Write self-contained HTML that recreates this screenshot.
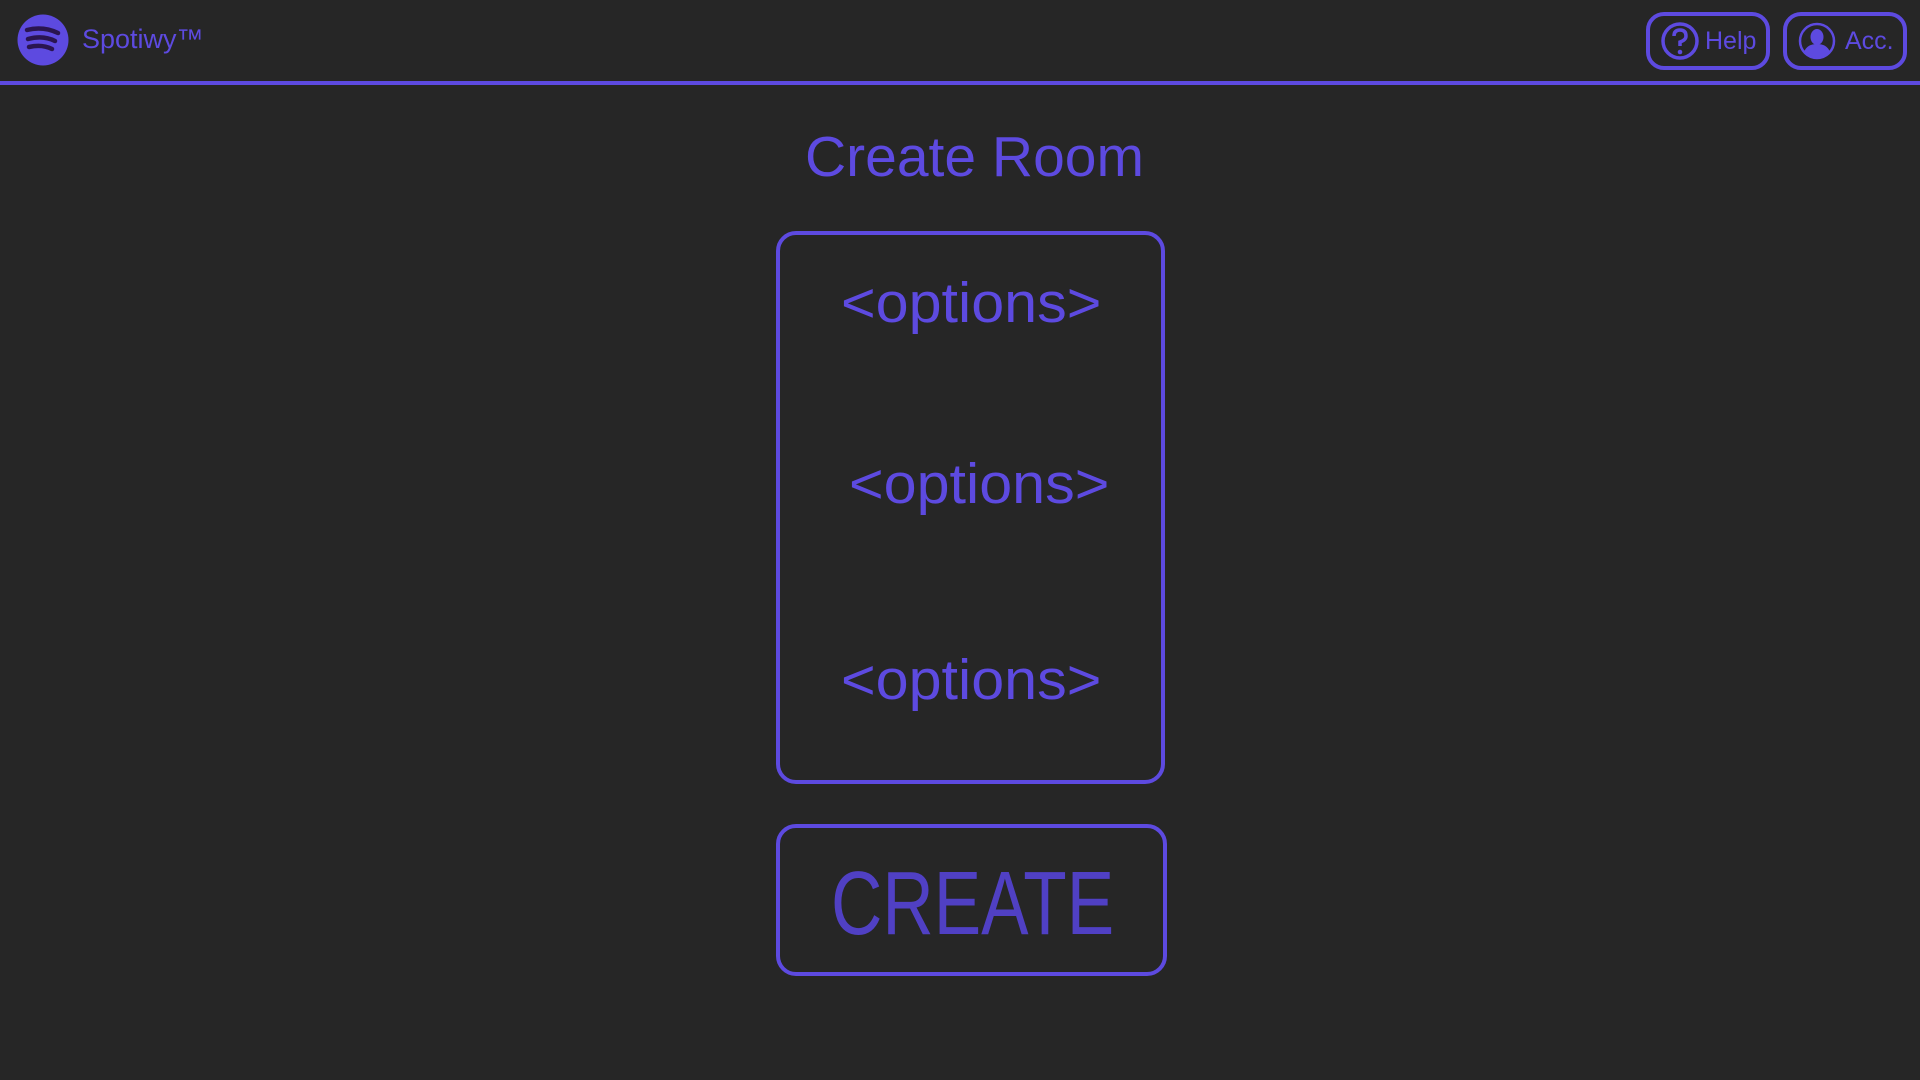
<!DOCTYPE html>
<html><head><style>
body{margin:0;width:1920px;height:1080px;background:#262626;font-family:"Liberation Sans",sans-serif;color:#5d4ae0;position:relative;overflow:hidden}
.a{position:absolute}
.line{left:0;top:81px;width:1920px;height:4px;background:#5d4ae0}
.btn{border:4px solid #5d4ae0;border-radius:18px;box-sizing:border-box;height:58px;top:12px;display:flex;align-items:center;font-size:25px}
.box{left:776px;top:231px;width:389px;height:553px;border:4px solid #5d4ae0;border-radius:20px;box-sizing:border-box}
.opt{font-size:57px;white-space:nowrap;transform:scaleX(1.04);transform-origin:left}
</style></head><body>
<svg class="a" style="left:17px;top:14px" width="52" height="52" viewBox="0 0 52 52">
<circle cx="26" cy="26" r="25.5" fill="#5d4ae0"/>
<g stroke="#2a1550" stroke-width="4.5" stroke-linecap="round" fill="none">
<path d="M10 16 Q26 12 41 19"/><path d="M11 25 Q26 21 38 27"/><path d="M12 33 Q25 30 35 35"/></g></svg>
<div class="a" style="left:82px;top:24px;font-size:27px">Spotiwy™</div>
<div class="a line"></div>
<div class="a btn" style="left:1646px;width:124px">
<svg style="margin-left:10px" width="40" height="40" viewBox="0 0 40 40"><circle cx="20" cy="20" r="17" stroke="#5d4ae0" stroke-width="3.5" fill="none"/><path d="M14 15 Q14 9 20 9 Q26 9 26 15 Q26 19 20 21 L20 25" stroke="#5d4ae0" stroke-width="3.5" fill="none"/><circle cx="20" cy="31" r="2.3" fill="#5d4ae0"/></svg>
<span style="margin-left:5px">Help</span></div>
<div class="a btn" style="left:1783px;width:124px">
<svg style="margin-left:10px" width="40" height="40" viewBox="0 0 40 40"><circle cx="20" cy="20" r="17" stroke="#5d4ae0" stroke-width="2.5" fill="none"/><ellipse cx="20" cy="16" rx="6.5" ry="8" fill="#5d4ae0"/><path d="M7 31 Q10 23 20 23 Q30 23 33 31 Q27 37 20 37 Q13 37 7 31Z" fill="#5d4ae0"/></svg>
<span style="margin-left:8px">Acc.</span></div>
<div class="a" style="left:805px;top:124px;font-size:57px;white-space:nowrap">Create Room</div>
<div class="a box"></div>
<div class="a opt" style="left:841px;top:270px">&lt;options&gt;</div>
<div class="a opt" style="left:849px;top:451px">&lt;options&gt;</div>
<div class="a opt" style="left:841px;top:647px">&lt;options&gt;</div>
<div class="a" style="left:776px;top:824px;width:391px;height:152px;border:4px solid #5d4ae0;border-radius:20px;box-sizing:border-box"></div>
<div class="a" style="left:831px;top:853px;font-size:90px;color:#5040c4;transform:scaleX(0.79);transform-origin:left;white-space:nowrap">CREATE</div>
</body></html>
